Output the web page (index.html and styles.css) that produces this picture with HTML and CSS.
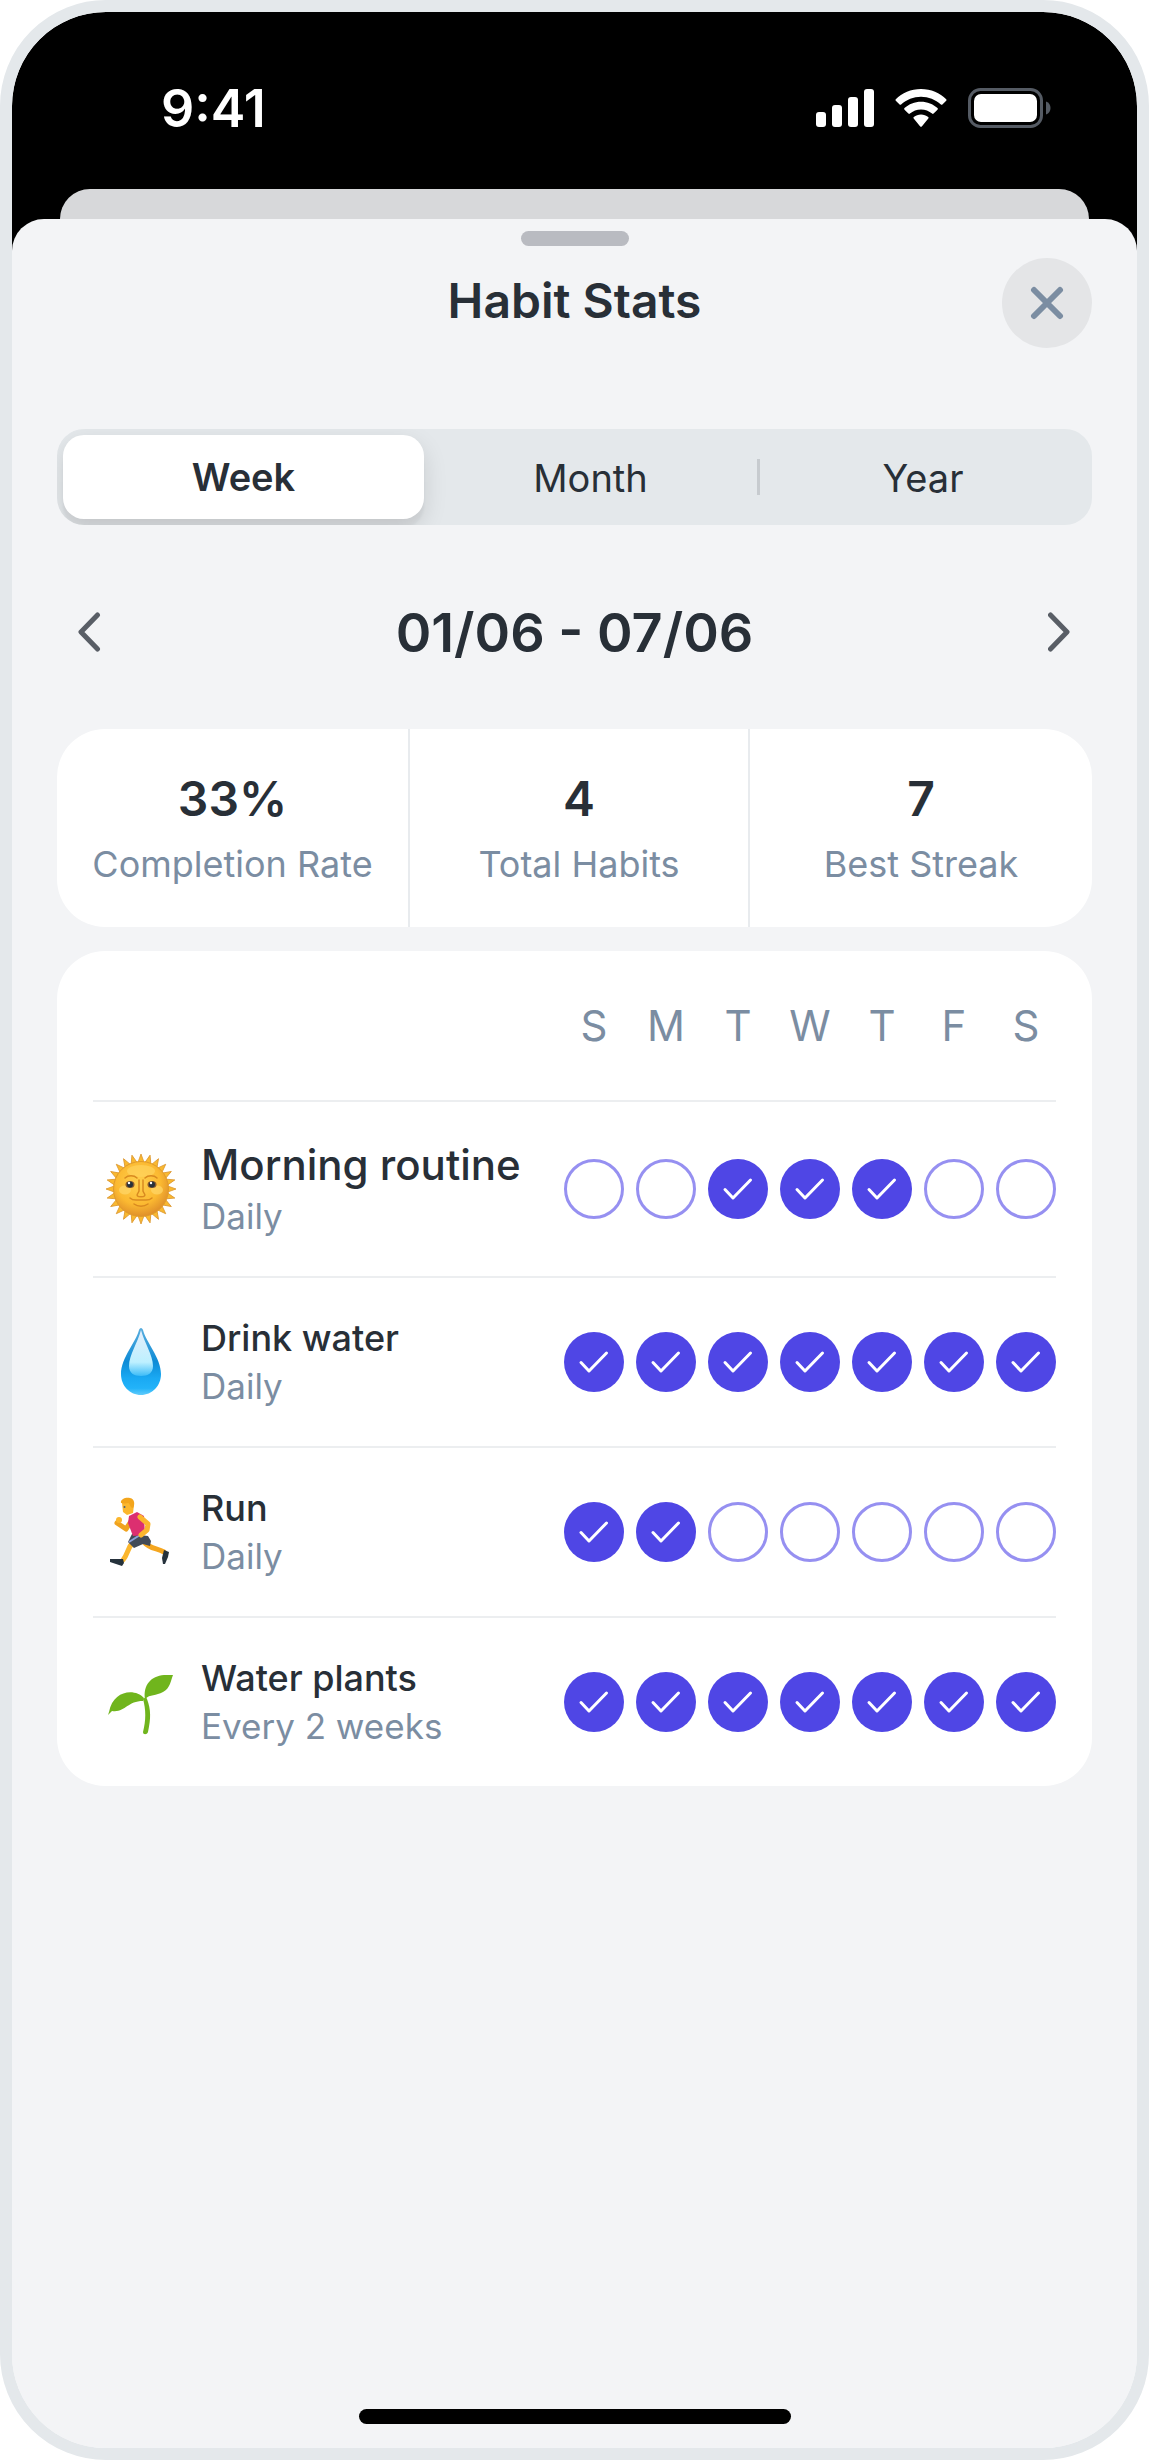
FILE: index.html
```
<!DOCTYPE html>
<html lang="en">
<head>
    <meta charset="utf-8">
    <title>Habit Stats</title>
    <meta name="viewport" content="width=device-width, initial-scale=1">
    <link rel="stylesheet" href="styles.css">
</head>
<body>
    <div class="phone">
        <div class="status-bar">
            <span class="time">9:41</span>
            <div class="status-icons">
                <svg width="58" height="38" viewBox="0 0 58 38" fill="#fff">
                    <rect x="0" y="23" width="10" height="15" rx="3"/>
                    <rect x="16" y="16" width="10" height="22" rx="3"/>
                    <rect x="32" y="8" width="10" height="30" rx="3"/>
                    <rect x="48" y="0" width="10" height="38" rx="3"/>
                </svg>
                <svg width="52" height="38" viewBox="0 0 52 38" fill="#fff">
                    <path d="M26 0C16 0 7 4 .8 10.200q-.8.8 0 1.600l3.800 3.700q.7.700 1.500 0C11.500 10.500 18.500 7.700 26 7.700s14.500 2.800 19.900 7.800q.8.700 1.500 0l3.800-3.700q.8-.8 0-1.600C45 4 36 0 26 0z"/>
                    <path d="M26 12.700c-6.300 0-12.100 2.400-16.500 6.400q-.8.800 0 1.600l3.900 3.800q.7.700 1.500.1c3-2.700 6.900-4.200 11.100-4.200s8.100 1.500 11.100 4.200q.8.600 1.500-.1l3.900-3.800q.8-.8 0-1.600c-4.400-4-10.200-6.400-16.500-6.400z"/>
                    <path d="M26 25.500c-2.700 0-5.200.9-7.200 2.500q-.8.800-.1 1.600l6.500 7.800q.8.900 1.600 0l6.500-7.800q.7-.8-.1-1.600c-2-1.600-4.500-2.500-7.200-2.500z"/>
                </svg>
                <svg width="83" height="42" viewBox="0 0 83 42">
                    <rect x="1.500" y="2.500" width="72" height="37" rx="11" fill="none" stroke="#555b64" stroke-width="3"/>
                    <rect x="6" y="7" width="63" height="28" rx="7" fill="#fff"/>
                    <path d="M78 14.500c3 1.200 4.500 3.500 4.500 6.500s-1.500 5.300-4.500 6.500z" fill="#555b64"/>
                </svg>
            </div>
        </div>

        <div class="back-sheet"></div>

        <main class="sheet">
            <div class="grabber"></div>
            <header class="sheet-header">
                <h1>Habit Stats</h1>
                <button class="close" type="button" aria-label="Close">
                    <svg width="34" height="34" viewBox="0 0 34 34" fill="none" stroke="#7b8da2" stroke-width="6" stroke-linecap="round">
                        <path d="M4 4l26 26M30 4L4 30"/>
                    </svg>
                </button>
            </header>

            <div class="tabs">
                <button type="button" class="tab active">Week</button>
                <button type="button" class="tab">Month</button>
                <button type="button" class="tab">Year</button>
            </div>

            <div class="period">
                <button type="button" aria-label="Previous week">
                    <svg width="24" height="42" viewBox="0 0 24 42">
                        <path d="M20.500 4L4 21l16.500 17"/>
                    </svg>
                </button>
                <h2>01/06 - 07/06</h2>
                <button type="button" aria-label="Next week">
                    <svg width="24" height="42" viewBox="0 0 24 42">
                        <path d="M2.500 4L19 21 2.500 38"/>
                    </svg>
                </button>
            </div>

            <div class="stats">
                <div class="stat">
                    <p class="value">33%</p>
                    <p class="label">Completion Rate</p>
                </div>
                <div class="stat">
                    <p class="value">4</p>
                    <p class="label">Total Habits</p>
                </div>
                <div class="stat">
                    <p class="value">7</p>
                    <p class="label">Best Streak</p>
                </div>
            </div>

            <div class="habits">
                <table>
                    <thead>
                        <tr>
                            <td></td>
                            <th>S</th>
                            <th>M</th>
                            <th>T</th>
                            <th>W</th>
                            <th>T</th>
                            <th>F</th>
                            <th>S</th>
                        </tr>
                    </thead>
                    <tbody>
                        <tr>
                            <td>
                                <div class="habit">
                                    <svg class="icon" viewBox="0 0 72 72">
                                        <defs>
                                            <radialGradient id="sun" cx="45%" cy="38%" r="62%">
                                                <stop offset="0" stop-color="#ffd04e"/>
                                                <stop offset=".65" stop-color="#fbb931"/>
                                                <stop offset="1" stop-color="#e0902a"/>
                                            </radialGradient>
                                            <path id="ray" d="M32 12L36 1l4 11z"/>
                                            <g id="rays">
                                                <use href="#ray"/>
                                                <use href="#ray" transform="rotate(15 36 36)"/>
                                                <use href="#ray" transform="rotate(30 36 36)"/>
                                                <use href="#ray" transform="rotate(45 36 36)"/>
                                            </g>
                                        </defs>
                                        <g fill="#f9b92f" stroke="#dc9730" stroke-width=".8">
                                            <use href="#rays"/>
                                            <use href="#rays" transform="rotate(60 36 36)"/>
                                            <use href="#rays" transform="rotate(120 36 36)"/>
                                            <use href="#rays" transform="rotate(180 36 36)"/>
                                            <use href="#rays" transform="rotate(240 36 36)"/>
                                            <use href="#rays" transform="rotate(300 36 36)"/>
                                        </g>
                                        <circle cx="36" cy="36" r="27.500" fill="url(#sun)" stroke="#e09a2b"/>
                                        <ellipse cx="36" cy="18" rx="14" ry="6" fill="#ffd35c" opacity=".7"/>
                                        <ellipse cx="20" cy="37" rx="6" ry="4.500" fill="#ffd76a" opacity=".7"/>
                                        <ellipse cx="52" cy="37" rx="6" ry="4.500" fill="#ffd76a" opacity=".7"/>
                                        <g fill="none" stroke="#d98a20" stroke-width="1.500" stroke-linecap="round">
                                            <path d="M20 25c3-3 9-3 12 0M52 25c-3-3-9-3-12 0"/>
                                            <path d="M34 27v11c-1 3-3 3.500-1.500 5 1 1 6 1 7 0 1.500-1.500-.5-2-1.500-5V27"/>
                                            <path d="M25 45c3 3 6 2 9 2h4c3 0 6 1 9-2M29 51c4 3 10 3 14 0"/>
                                        </g>
                                        <ellipse cx="25" cy="31.500" rx="4.500" ry="3.500" fill="#8a5a2c"/>
                                        <ellipse cx="47" cy="31.500" rx="4.500" ry="3.500" fill="#8a5a2c"/>
                                        <circle cx="25" cy="31.500" r="3" fill="#26323c"/>
                                        <circle cx="47" cy="31.500" r="3" fill="#26323c"/>
                                        <circle cx="24" cy="30" r="1.200" fill="#fff"/>
                                        <circle cx="46" cy="30" r="1.200" fill="#fff"/>
                                    </svg>
                                    <div>
                                        <p class="name current">Morning routine</p>
                                        <p class="label">Daily</p>
                                    </div>
                                </div>
                            </td>
                            <td><input type="checkbox" aria-label="Morning routine, Sunday"></td>
                            <td><input type="checkbox" aria-label="Morning routine, Monday"></td>
                            <td><input type="checkbox" aria-label="Morning routine, Tuesday" checked></td>
                            <td><input type="checkbox" aria-label="Morning routine, Wednesday" checked></td>
                            <td><input type="checkbox" aria-label="Morning routine, Thursday" checked></td>
                            <td><input type="checkbox" aria-label="Morning routine, Friday"></td>
                            <td><input type="checkbox" aria-label="Morning routine, Saturday"></td>
                        </tr>
                        <tr>
                            <td>
                                <div class="habit">
                                    <svg class="icon" viewBox="0 0 72 72">
                                        <defs>
                                            <linearGradient id="drop" x1="0" y1="0" x2="0" y2="1">
                                                <stop offset="0" stop-color="#5aaede"/>
                                                <stop offset=".5" stop-color="#0d8bd6"/>
                                                <stop offset=".75" stop-color="#1aa9f3"/>
                                                <stop offset=".9" stop-color="#22b3f9"/>
                                                <stop offset="1" stop-color="#62ccfb"/>
                                            </linearGradient>
                                            <linearGradient id="shine" x1="0" y1="0" x2="0" y2="1">
                                                <stop offset="0" stop-color="#e6eefb"/>
                                                <stop offset=".7" stop-color="#bdf0ff"/>
                                                <stop offset="1" stop-color="#3dbcf8"/>
                                            </linearGradient>
                                        </defs>
                                        <path d="M36 2c1 0 1.600 1 2 2 3 12 18 28 18 44 0 12-9 21-20 21s-20-9-20-21C16 32 31 16 34 4c.4-1 1-2 2-2z" fill="url(#drop)"/>
                                        <path d="M36 4c3 12 12 25 12 36 0 7-5 10-12 10s-12-3-12-10C24 29 33 16 36 4z" fill="url(#shine)"/>
                                    </svg>
                                    <div>
                                        <p class="name">Drink water</p>
                                        <p class="label">Daily</p>
                                    </div>
                                </div>
                            </td>
                            <td><input type="checkbox" aria-label="Drink water, Sunday" checked></td>
                            <td><input type="checkbox" aria-label="Drink water, Monday" checked></td>
                            <td><input type="checkbox" aria-label="Drink water, Tuesday" checked></td>
                            <td><input type="checkbox" aria-label="Drink water, Wednesday" checked></td>
                            <td><input type="checkbox" aria-label="Drink water, Thursday" checked></td>
                            <td><input type="checkbox" aria-label="Drink water, Friday" checked></td>
                            <td><input type="checkbox" aria-label="Drink water, Saturday" checked></td>
                        </tr>
                        <tr>
                            <td>
                                <div class="habit">
                                    <svg class="icon" viewBox="0 0 72 72">
                                        <!-- back arm and legs -->
                                        <path d="M27 24l-6 9-9-6" fill="none" stroke="#f0a31f" stroke-width="5" stroke-linecap="round" stroke-linejoin="round"/>
                                        <circle cx="14" cy="24" r="3" fill="#fbb62d"/>
                                        <path d="M39 46c6 7 13 6 20 10" fill="none" stroke="#f5a61f" stroke-width="5" stroke-linecap="round"/>
                                        <path d="M28 46c-6 7-5 12-10 18" fill="none" stroke="#fbb62d" stroke-width="5" stroke-linecap="round"/>
                                        <path d="M5 63l13 0 1 4-2 3-12-4z" fill="#26323c"/>
                                        <path d="M59 54l5 2-1 5-3 7h-2l-1-6z" fill="#26323c"/>
                                        <!-- shorts and vest -->
                                        <path d="M27 38l16 2 3 5-1 5-7-2-9 4-6-6z" fill="#424b57"/>
                                        <path d="M24 46l11-7" stroke="#8ba0d8" stroke-width="2"/>
                                        <path d="M24 20l8-4 7 4 1 19-12 1-5-13z" fill="#dc2f70"/>
                                        <!-- head -->
                                        <path d="M17 7c5-5 12-3 12 2l-1 8-6 2-4-3z" fill="#fbb62d"/>
                                        <path d="M16 7c-1-4 5-6 9-5 5 1 5 7 3 10-3 0-3-5-5-5-3 1-5 0-7 0z" fill="#f3a51c"/>
                                        <circle cx="19.500" cy="11" r="1" fill="#476078"/>
                                        <!-- front arm -->
                                        <path d="M35 21l8 7-1 6-6 5" fill="none" stroke="#fbb62d" stroke-width="5" stroke-linecap="round" stroke-linejoin="round"/>
                                    </svg>
                                    <div>
                                        <p class="name">Run</p>
                                        <p class="label">Daily</p>
                                    </div>
                                </div>
                            </td>
                            <td><input type="checkbox" aria-label="Run, Sunday" checked></td>
                            <td><input type="checkbox" aria-label="Run, Monday" checked></td>
                            <td><input type="checkbox" aria-label="Run, Tuesday"></td>
                            <td><input type="checkbox" aria-label="Run, Wednesday"></td>
                            <td><input type="checkbox" aria-label="Run, Thursday"></td>
                            <td><input type="checkbox" aria-label="Run, Friday"></td>
                            <td><input type="checkbox" aria-label="Run, Saturday"></td>
                        </tr>
                        <tr>
                            <td>
                                <div class="habit">
                                    <svg class="icon" viewBox="0 0 72 72" fill="#70b51d">
                                        <path d="M39 32c-9-10-31-8-35 14l-1 3 4-4c13 2 15-10 31-10z"/>
                                        <path d="M40 33c-2-14 6-23 19-24h9c-2 5-3 14-10 17-7 4-13 2-18 7z"/>
                                        <path d="M38 33c3 11 3 21 0 33 0 3 4 3 5 0 3-14 3-22-1-33l-1-2z"/>
                                    </svg>
                                    <div>
                                        <p class="name">Water plants</p>
                                        <p class="label">Every 2 weeks</p>
                                    </div>
                                </div>
                            </td>
                            <td><input type="checkbox" aria-label="Water plants, Sunday" checked></td>
                            <td><input type="checkbox" aria-label="Water plants, Monday" checked></td>
                            <td><input type="checkbox" aria-label="Water plants, Tuesday" checked></td>
                            <td><input type="checkbox" aria-label="Water plants, Wednesday" checked></td>
                            <td><input type="checkbox" aria-label="Water plants, Thursday" checked></td>
                            <td><input type="checkbox" aria-label="Water plants, Friday" checked></td>
                            <td><input type="checkbox" aria-label="Water plants, Saturday" checked></td>
                        </tr>
                    </tbody>
                </table>
            </div>

            <div class="home-indicator"></div>
        </main>
    </div>
</body>
</html>
```
FILE: styles.css
```
* {
    margin: 0;
    padding: 0;
    box-sizing: border-box;
}

body {
    background: #fff;
    color: #282f37;
    font-family: 'Inter', 'Liberation Sans', sans-serif;
}

button {
    border: 0;
    background: none;
    color: inherit;
    font-family: inherit;
    cursor: pointer;
}

svg {
    display: block;
}

.phone {
    display: flex;
    flex-direction: column;
    min-height: 100vh;
    border: 12px solid #e4e8eb;
    border-radius: 106px;
    background: linear-gradient(#000 300px, #f3f4f6 300px) padding-box;
    overflow: hidden;
}

/* status bar */
.status-bar {
    display: flex;
    align-items: center;
    justify-content: space-between;
    height: 177px;
    padding: 15px 86px 0 149px;
    color: #fff;
}
.time {
    font-size: 52px;
    font-weight: 600;
}
.status-icons {
    display: flex;
    align-items: center;
    gap: 21px;
}

/* sheets */
.back-sheet {
    height: 30px;
    margin: 0 48px;
    border-radius: 30px 30px 0 0;
    background: #d7d8da;
}
.sheet {
    flex: 1;
    display: flex;
    flex-direction: column;
    padding: 12px 45px 24px;
    border-radius: 32px 32px 0 0;
    background: #f3f4f6;
}
.grabber {
    width: 108px;
    height: 15px;
    margin: 0 auto 12px;
    border-radius: 8px;
    background: #b9bbc1;
}
.sheet-header {
    display: grid;
    grid-template-columns: 90px 1fr 90px;
}
.sheet-header h1 {
    grid-column: 2;
    font-size: 48px;
    font-weight: 600;
    line-height: 86px;
    text-align: center;
}
.close {
    display: flex;
    align-items: center;
    justify-content: center;
    width: 90px;
    height: 90px;
    border-radius: 50%;
    background: #e4e5e7;
}

/* week / month / year */
.tabs {
    display: grid;
    grid-template-columns: 361fr 333fr 329fr;
    align-items: center;
    margin-top: 81px;
    padding: 6px;
    border-radius: 27px;
    background: #e4e8eb;
    overflow: hidden;
}
.tab {
    height: 36px;
    font-size: 38px;
    line-height: 38px;
}
.tab + .tab + .tab {
    border-left: 3px solid #c7cbcf;
}
.tab.active {
    height: 84px;
    border-radius: 21px;
    background: #fff;
    box-shadow: 0 9px 24px rgba(0, 0, 0, 0.12), 0 9px 3px rgba(0, 0, 0, 0.04);
    font-weight: 600;
}

.period {
    display: flex;
    align-items: center;
    justify-content: space-between;
    height: 84px;
    margin: 65px 0 55px;
}
.period h2 {
    font-size: 54px;
    font-weight: 600;
}
.period button {
    padding: 20px;
}
.period path {
    fill: none;
    stroke: #595e66;
    stroke-width: 5;
    stroke-linecap: round;
    stroke-linejoin: round;
}

/* summary card */
.stats {
    display: grid;
    grid-template-columns: 351fr 340fr 344fr;
    border-radius: 48px;
    background: #fff;
    text-align: center;
}
.stat {
    padding: 40px 0 39px;
}
.stat + .stat {
    border-left: 2px solid #e8ebee;
}
.value {
    margin-bottom: 11px;
    font-size: 48px;
    font-weight: 600;
    line-height: 60px;
}
.label {
    color: #7b8da2;
    font-size: 36px;
    line-height: 48px;
}

/* habit table */
.habits {
    margin-top: 24px;
    padding: 0 36px;
    border-radius: 48px;
    background: #fff;
}
table {
    width: 100%;
    border-spacing: 0;
}
thead tr {
    height: 149px;
}
th {
    width: 72px;
    padding-left: 12px;
    color: #7b8da2;
    font-size: 42px;
    font-weight: 400;
}
tbody td {
    border-top: 2px solid #eceef0;
    padding: 36px 0 36px 12px;
    vertical-align: middle;
}
.habit {
    display: flex;
    align-items: center;
    gap: 24px;
    white-space: nowrap;
}
.habit .label {
    font-size: 35px;
}
.icon {
    width: 72px;
    height: 72px;
}
.name {
    font-size: 36px;
    font-weight: 500;
    line-height: 48px;
}
.name.current {
    font-size: 42px;
    line-height: 54px;
}
input[type="checkbox"] {
    appearance: none;
    display: block;
    width: 60px;
    height: 60px;
    border: 3px solid #9690f1;
    border-radius: 50%;
}
input[type="checkbox"]:checked {
    border: 0;
    background: #4f46e5 url("data:image/svg+xml,%3Csvg xmlns='http://www.w3.org/2000/svg' viewBox='0 0 60 60'%3E%3Cpath d='M17 30.500l8 8.500L42.500 21' fill='none' stroke='%23fff' stroke-width='3' stroke-linecap='round' stroke-linejoin='round'/%3E%3C/svg%3E");
}

.home-indicator {
    width: 432px;
    height: 15px;
    margin: auto auto 0;
    border-radius: 8px;
    background: #000;
}
```
